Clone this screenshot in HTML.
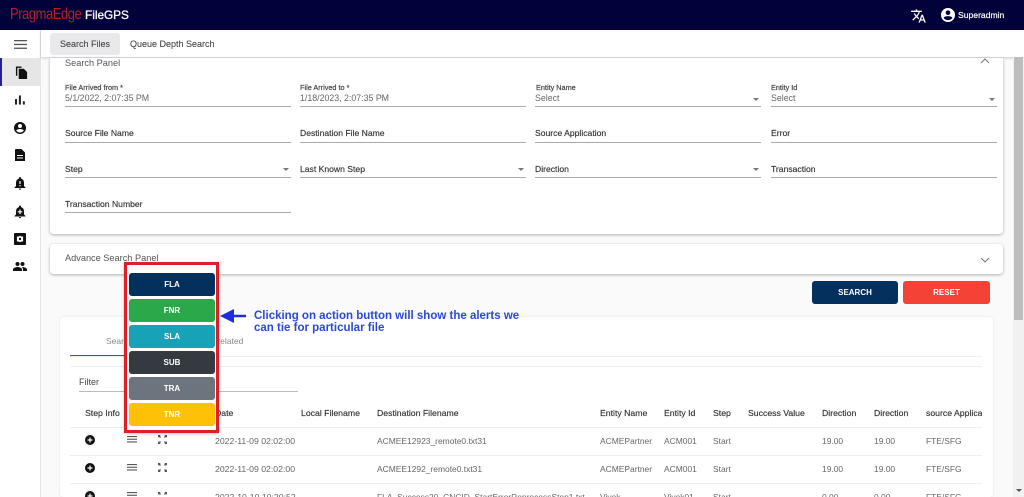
<!DOCTYPE html>
<html><head><meta charset="utf-8"><style>
*{box-sizing:border-box}
html,body{margin:0;padding:0;width:1024px;height:497px;overflow:hidden;background:#fafafa;font-family:"Liberation Sans",sans-serif}
#w{position:absolute;left:0;top:0;width:1024px;height:497px;overflow:hidden;filter:blur(.3px)}
.a{position:absolute;white-space:nowrap}
.lab{font-size:7.300px;color:#444;-webkit-text-stroke:.2px #444}
.val{font-size:8.800px;color:#666}
.fld{font-size:8.600px;color:#333;-webkit-text-stroke:.15px #333}
.ln{position:absolute;height:1px;background:#aaa}
.th{position:absolute;font-size:8.700px;color:#333;top:408px;white-space:nowrap;-webkit-text-stroke:.15px #333}
.td{position:absolute;font-size:8.450px;color:#666;white-space:nowrap}
.btn{position:absolute;left:129px;width:86px;height:23px;border-radius:3px;color:#fff;font-size:8px;font-weight:bold;text-align:center;line-height:23px}
.rl{position:absolute;left:70px;width:912px;height:1px;background:#eee}
.dd{position:absolute;width:0;height:0;border-left:3px solid transparent;border-right:3px solid transparent;border-top:3px solid #777}
svg{position:absolute}
</style></head><body><div id="w">
<!-- header -->
<div class="a" style="left:0;top:0;width:1024px;height:30px;background:#02023a"></div>
<div class="a" style="left:10px;top:6px;font-size:16px;line-height:18px;color:#b3202c;letter-spacing:-.6px;transform-origin:left;transform:scaleX(.815)">PragmaEdge</div>
<div class="a" style="left:85px;top:7px;font-size:11.800px;line-height:16px;color:#fff;-webkit-text-stroke:.3px #fff">FileGPS</div>
<svg style="left:910px;top:8px" width="17" height="16" viewBox="0 0 24 24" fill="#fff"><path d="M12.87 15.07l-2.54-2.51.03-.03c1.74-1.94 2.98-4.17 3.71-6.53H17V4h-7V2H8v2H1v1.99h11.17C11.5 7.92 10.44 9.75 9 11.35 8.07 10.32 7.3 9.19 6.69 8h-2c.73 1.63 1.73 3.17 2.98 4.56l-5.09 5.02L4 19l5-5 3.11 3.11.76-2.04zM18.5 10h-2L12 22h2l1.12-3h4.75L21 22h2l-4.5-12zm-2.62 7l1.62-4.33L19.12 17h-3.24z"/></svg>
<svg style="left:941px;top:8px" width="14" height="14" viewBox="0 0 24 24" fill="#fff"><path d="M12 0a12 12 0 100 24 12 12 0 000-24zm0 4a4 4 0 110 8 4 4 0 010-8zm0 17c-3 0-5.800-1.500-7.400-3.800C4.700 14.800 9.500 14 12 14s7.300.8 7.400 3.200C17.800 19.500 15 21 12 21z"/></svg>
<div class="a" style="left:958px;top:9px;font-size:8.600px;line-height:12px;color:#fff;-webkit-text-stroke:.2px #fff">Superadmin</div>

<!-- sidebar -->
<div class="a" style="left:0;top:30px;width:41px;height:467px;background:#fff;border-right:1px solid #e4e4e4"></div>
<div class="a" style="left:0;top:58px;width:41px;height:28px;background:#e6e6e6;border-left:2px solid #23238e"></div>
<svg style="left:14px;top:40px" width="13" height="9" viewBox="0 0 13 9" fill="#555"><rect width="13" height="1.300"/><rect y="3.800" width="13" height="1.300"/><rect y="7.600" width="13" height="1.300"/></svg>
<svg style="left:15px;top:65px" width="13" height="15" viewBox="0 0 14 15" fill="#111"><path d="M1 1h6v1.500H2.500V11H1z"/><path d="M4 3.500h5.500L13 7v7.500H4z"/></svg>
<svg style="left:15px;top:95px" width="10" height="10" viewBox="0 0 11 10" fill="#222"><rect x="0" y="4" width="2.200" height="6"/><rect x="4.300" y="0" width="2.200" height="10"/><rect x="8.600" y="6.500" width="2.200" height="3.500"/></svg>
<svg style="left:14px;top:122px" width="12" height="12" viewBox="0 0 24 24" fill="#111"><path d="M12 0a12 12 0 100 24 12 12 0 000-24zm0 4a4 4 0 110 8 4 4 0 010-8zm0 17c-3 0-5.800-1.500-7.400-3.800C4.700 14.800 9.500 14 12 14s7.300.8 7.400 3.200C17.800 19.500 15 21 12 21z"/></svg>
<svg style="left:15px;top:149px" width="10" height="12" viewBox="0 0 10 12" fill="#111"><path fill-rule="evenodd" d="M1 0h5.500L10 3.500V12H0V1a1 1 0 011-1zM2 6v1h6V6zm0 2.500v1h6v-1z"/></svg>
<svg style="left:14px;top:177px" width="12" height="13" viewBox="0 0 12 13" fill="#111"><path fill-rule="evenodd" d="M6 0c.6 0 1 .4 1 1v.600C9 2.100 10 3.800 10 6v3l1.500 1.500v.5H.5v-.5L2 9V6c0-2.200 1-3.900 3-4.400V1c0-.6.4-1 1-1zM5.400 4v3h1.200V4zm0 4v1.200h1.200V8zM4.800 11.600h2.400a1.200 1.200 0 01-2.400 0z"/></svg>
<svg style="left:14px;top:205px" width="12" height="14" viewBox="0 0 12 13" fill="#111"><path fill-rule="evenodd" d="M6 0c.6 0 1 .4 1 1v.600C9 2.100 10 3.800 10 6v3l1.500 1.500v.5H.5v-.5L2 9V6c0-2.200 1-3.900 3-4.400V1c0-.6.4-1 1-1zM5.400 4v1.700H3.700v1.200h1.700v1.700h1.200V6.900h1.700V5.700H6.600V4zM4.800 11.600h2.400a1.200 1.200 0 01-2.400 0z"/></svg>
<svg style="left:14px;top:233px" width="12" height="12" viewBox="0 0 12 12" fill="#111"><path fill-rule="evenodd" d="M1 0h10a1 1 0 011 1v10a1 1 0 01-1 1H1a1 1 0 01-1-1V1a1 1 0 011-1zm5 2.800L4.800 3.500 3.500 3.300 2.800 4.500 3 5.800v.5l-.2 1.200.7 1.200 1.300-.2L6 9.200l1.200-.7 1.300.2.7-1.200L9 6.300v-.5l.2-1.300-.7-1.200-1.300.2z"/><circle cx="6" cy="6" r="1.200"/></svg>
<svg style="left:13px;top:262px" width="14" height="9" viewBox="0 0 14 9" fill="#111"><circle cx="4.500" cy="2" r="2"/><circle cx="9.500" cy="2" r="2"/><path d="M0 9V7.500C0 5.800 3 5 4.500 5S9 5.800 9 7.500V9zM10 9V7.500c0-1-.5-1.700-1.200-2.300C11 5 14 5.800 14 7.500V9z"/></svg>

<!-- tab bar -->
<div class="a" style="left:41px;top:30px;width:983px;height:27px;background:#fff;box-shadow:0 1px 3px rgba(0,0,0,.2)"></div>
<div class="a" style="left:50px;top:33px;width:70px;height:22px;background:#e9e9ec;border-radius:3px;font-size:9px;line-height:22px;color:#444;text-align:center;-webkit-text-stroke:.1px #444">Search Files</div>
<div class="a" style="left:130px;top:38px;font-size:9px;line-height:12px;color:#444;-webkit-text-stroke:.1px #444">Queue Depth Search</div>

<!-- search panel -->
<div class="a" style="left:50px;top:58px;width:953px;height:176px;background:#fff;border-radius:0 0 4px 4px;box-shadow:0 1px 3px rgba(0,0,0,.3)"></div>
<div class="a" style="left:65px;top:56px;font-size:9.200px;line-height:12px;color:#555;padding-top:1px">Search Panel</div>
<svg style="left:980px;top:58px" width="10" height="6" viewBox="0 0 10 6" fill="none" stroke="#777"><path d="M1 5l4-4 4 4"/></svg>

<div class="a lab" style="left:65px;top:83px">File Arrived from *</div><div class="a val" style="left:65px;top:93px">5/1/2022, 2:07:35 PM</div><div class="ln" style="left:65px;top:106px;width:226px"></div>
<div class="a lab" style="left:300px;top:83px">File Arrived to *</div><div class="a val" style="left:300px;top:93px">1/18/2023, 2:07:35 PM</div><div class="ln" style="left:300px;top:106px;width:226px"></div>
<div class="a lab" style="left:536px;top:83px">Entity Name</div><div class="a val" style="left:535px;top:93px">Select</div><div class="ln" style="left:535px;top:106px;width:226px"></div><div class="dd" style="left:753px;top:98px"></div>
<div class="a lab" style="left:771px;top:83px">Entity Id</div><div class="a val" style="left:771px;top:93px">Select</div><div class="ln" style="left:771px;top:106px;width:226px"></div><div class="dd" style="left:989px;top:98px"></div>

<div class="a fld" style="left:65px;top:128px">Source File Name</div><div class="ln" style="left:65px;top:142px;width:226px"></div>
<div class="a fld" style="left:300px;top:128px">Destination File Name</div><div class="ln" style="left:300px;top:142px;width:226px"></div>
<div class="a fld" style="left:535px;top:128px">Source Application</div><div class="ln" style="left:535px;top:142px;width:226px"></div>
<div class="a fld" style="left:771px;top:128px">Error</div><div class="ln" style="left:771px;top:142px;width:226px"></div>

<div class="a fld" style="left:65px;top:164px">Step</div><div class="ln" style="left:65px;top:177px;width:226px"></div><div class="dd" style="left:283px;top:168px"></div>
<div class="a fld" style="left:300px;top:164px">Last Known Step</div><div class="ln" style="left:300px;top:177px;width:226px"></div><div class="dd" style="left:518px;top:168px"></div>
<div class="a fld" style="left:535px;top:164px">Direction</div><div class="ln" style="left:535px;top:177px;width:226px"></div><div class="dd" style="left:753px;top:168px"></div>
<div class="a fld" style="left:771px;top:164px">Transaction</div><div class="ln" style="left:771px;top:177px;width:226px"></div>

<div class="a fld" style="left:65px;top:199px">Transaction Number</div><div class="ln" style="left:65px;top:212px;width:226px"></div>

<!-- advance panel -->
<div class="a" style="left:50px;top:244px;width:953px;height:30px;background:#fff;border-radius:4px;box-shadow:0 1px 3px rgba(0,0,0,.3)"></div>
<div class="a" style="left:65px;top:252px;font-size:9.200px;line-height:12px;color:#555">Advance Search Panel</div>
<svg style="left:980px;top:257px" width="10" height="6" viewBox="0 0 10 6" fill="none" stroke="#777"><path d="M1 1l4 4 4-4"/></svg>

<!-- buttons -->
<div class="a" style="left:812px;top:281px;width:86px;height:23px;background:#03305c;border-radius:3px;color:#fff;font-size:8px;font-weight:bold;line-height:23px;text-align:center">SEARCH</div>
<div class="a" style="left:903px;top:281px;width:87px;height:23px;background:#f44336;border-radius:3px;color:#fff;font-size:8px;font-weight:bold;line-height:23px;text-align:center">RESET</div>

<!-- results card -->
<div class="a" style="left:60px;top:317px;width:933px;height:180px;background:#fff;border-radius:4px;box-shadow:0 0 2px rgba(0,0,0,.1)"></div>
<div class="a" style="left:106px;top:335px;font-size:8.500px;line-height:12px;color:#888">Sear</div>
<div class="a" style="left:214px;top:335px;font-size:8.500px;line-height:12px;color:#888">Related</div>
<div class="a" style="left:70px;top:355px;width:70px;height:1px;background:#3f51a5"></div>
<div class="rl" style="top:356px"></div>
<div class="rl" style="top:366px"></div>
<div class="a" style="left:79px;top:376px;font-size:9px;line-height:12px;color:#444">Filter</div>
<div class="a" style="left:79px;top:391px;width:219px;height:1px;background:#bbb"></div>

<div class="th" style="left:85px">Step Info</div><div class="th" style="left:215px">Date</div><div class="th" style="left:301px">Local Filename</div><div class="th" style="left:377px">Destination Filename</div><div class="th" style="left:600px">Entity Name</div><div class="th" style="left:664px">Entity Id</div><div class="th" style="left:713px">Step</div><div class="th" style="left:748px">Success Value</div><div class="th" style="left:822px">Direction</div><div class="th" style="left:874px">Direction</div>
<div class="th" style="left:926px;width:56px;overflow:hidden">source Application</div>
<div class="rl" style="top:427px"></div>
<div class="rl" style="top:455px"></div>
<div class="rl" style="top:483px"></div>

<div class="td" style="left:215px;top:436px;font-size:8.700px">2022-11-09 02:02:00</div><div class="td" style="left:377px;top:436px">ACMEE12923_remote0.txt31</div><div class="td" style="left:600px;top:436px">ACMEPartner</div><div class="td" style="left:664px;top:436px">ACM001</div><div class="td" style="left:713px;top:436px">Start</div><div class="td" style="left:822px;top:436px">19.00</div><div class="td" style="left:874px;top:436px">19.00</div><div class="td" style="left:926px;top:436px">FTE/SFG</div>
<div class="td" style="left:215px;top:464px;font-size:8.700px">2022-11-09 02:02:00</div><div class="td" style="left:377px;top:464px">ACMEE1292_remote0.txt31</div><div class="td" style="left:600px;top:464px">ACMEPartner</div><div class="td" style="left:664px;top:464px">ACM001</div><div class="td" style="left:713px;top:464px">Start</div><div class="td" style="left:822px;top:464px">19.00</div><div class="td" style="left:874px;top:464px">19.00</div><div class="td" style="left:926px;top:464px">FTE/SFG</div>
<div class="td" style="left:215px;top:492px;font-size:8.700px">2022-10-10 10:20:52</div><div class="td" style="left:377px;top:492px">FLA_Success20_CNCID_StartErrorReprocessStep1.txt</div><div class="td" style="left:600px;top:492px">Vivek</div><div class="td" style="left:664px;top:492px">Vivek01</div><div class="td" style="left:713px;top:492px">Start</div><div class="td" style="left:822px;top:492px">0.00</div><div class="td" style="left:874px;top:492px">0.00</div><div class="td" style="left:926px;top:492px">FTE/SFG</div>

<!-- row icons -->
<svg width="0" height="0"><defs>
<g id="plus"><circle cx="5" cy="5" r="5" fill="#111"/><path d="M5 2.500v5M2.500 5h5" stroke="#fff" stroke-width="1.200"/></g>
<g id="menu" fill="#555"><rect width="10" height="1.100"/><rect y="2.700" width="10" height="1.100"/><rect y="5.400" width="10" height="1.100"/></g>
<g id="exp" fill="#555"><path d="M0 0h2.600L1.900.9 3 2 2 3 .9 1.900 0 2.600zM9 0H6.400l.7.9L6 2l1 1 1.100-1.100.9.7zM0 9V6.400l.9.700L2 6l1 1-1.100 1.100.7.9zM9 9V6.400l-.9.700L7 6 6 7l1.100 1.100-.7.9z"/></g>
</defs></svg>
<svg style="left:85px;top:435px" width="10" height="10"><use href="#plus"/></svg>
<svg style="left:85px;top:463px" width="10" height="10"><use href="#plus"/></svg>
<svg style="left:85px;top:491px" width="10" height="6"><use href="#plus"/></svg>
<svg style="left:127px;top:436px" width="10" height="7"><use href="#menu"/></svg>
<svg style="left:127px;top:464px" width="10" height="7"><use href="#menu"/></svg>
<svg style="left:127px;top:492px" width="10" height="5"><use href="#menu"/></svg>
<svg style="left:158px;top:435px" width="9" height="9"><use href="#exp"/></svg>
<svg style="left:158px;top:463px" width="9" height="9"><use href="#exp"/></svg>
<svg style="left:158px;top:492px" width="9" height="5"><use href="#exp"/></svg>

<!-- popup -->
<div class="a" style="left:124px;top:262px;width:95px;height:171px;background:#fff;border:3px solid #de1f2a;box-shadow:0 1px 3px rgba(0,0,0,.25)"></div>
<div class="btn" style="top:273px;background:#03305c">FLA</div>
<div class="btn" style="top:299px;background:#2ba84a">FNR</div>
<div class="btn" style="top:325px;background:#17a2b8">SLA</div>
<div class="btn" style="top:351px;background:#343a40">SUB</div>
<div class="btn" style="top:377px;background:#6c757d">TRA</div>
<div class="btn" style="top:403px;background:#ffc107">TNR</div>

<!-- annotation -->
<svg style="left:219px;top:307px" width="28" height="18" viewBox="0 0 28 18"><path d="M1 9L15 2v5.700h12v2.600H15V16z" fill="#1c2fe0"/></svg>
<div class="a" style="left:254px;top:310px;font-size:11.500px;line-height:12px;font-weight:bold;color:#2a48d8">Clicking on action button will show the alerts we<br>can tie for particular file</div>

<!-- scrollbar -->
<div class="a" style="left:1013px;top:57px;width:11px;height:440px;background:#f1f1f1"></div>
<div class="a" style="left:1014px;top:57px;width:9px;height:263px;background:#bdbdbd"></div>
<div class="dd" style="left:1016px;top:489px;border-top-color:#555"></div>
</div></body></html>
